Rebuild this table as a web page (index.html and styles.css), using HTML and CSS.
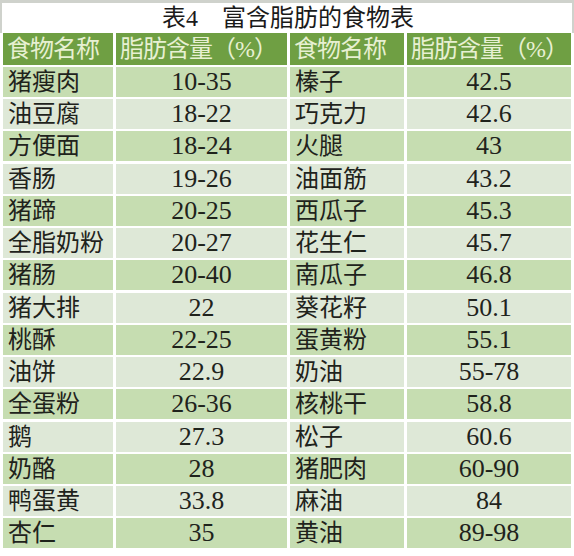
FILE: index.html
```html
<!DOCTYPE html>
<html lang="zh">
<head>
<meta charset="utf-8">
<link rel="stylesheet" href="styles.css">
</head>
<body>
<div class="sheet">
  <div class="title">表4　富含脂肪的食物表</div>
  <div class="table">
    <div class="cell head">食物名称</div><div class="cell head">脂肪含量（%）</div><div class="cell head">食物名称</div><div class="cell head">脂肪含量（%）</div>

    <div class="cell g">猪瘦肉</div><div class="cell g num">10-35</div><div class="cell g">榛子</div><div class="cell g num">42.5</div>
    <div class="cell l">油豆腐</div><div class="cell l num">18-22</div><div class="cell l">巧克力</div><div class="cell l num">42.6</div>
    <div class="cell g">方便面</div><div class="cell g num">18-24</div><div class="cell g">火腿</div><div class="cell g num">43</div>
    <div class="cell l">香肠</div><div class="cell l num">19-26</div><div class="cell l">油面筋</div><div class="cell l num">43.2</div>
    <div class="cell g">猪蹄</div><div class="cell g num">20-25</div><div class="cell g">西瓜子</div><div class="cell g num">45.3</div>
    <div class="cell l">全脂奶粉</div><div class="cell l num">20-27</div><div class="cell l">花生仁</div><div class="cell l num">45.7</div>
    <div class="cell g">猪肠</div><div class="cell g num">20-40</div><div class="cell g">南瓜子</div><div class="cell g num">46.8</div>
    <div class="cell l">猪大排</div><div class="cell l num">22</div><div class="cell l">葵花籽</div><div class="cell l num">50.1</div>
    <div class="cell g">桃酥</div><div class="cell g num">22-25</div><div class="cell g">蛋黄粉</div><div class="cell g num">55.1</div>
    <div class="cell l">油饼</div><div class="cell l num">22.9</div><div class="cell l">奶油</div><div class="cell l num">55-78</div>
    <div class="cell g">全蛋粉</div><div class="cell g num">26-36</div><div class="cell g">核桃干</div><div class="cell g num">58.8</div>
    <div class="cell l">鹅</div><div class="cell l num">27.3</div><div class="cell l">松子</div><div class="cell l num">60.6</div>
    <div class="cell g">奶酪</div><div class="cell g num">28</div><div class="cell g">猪肥肉</div><div class="cell g num">60-90</div>
    <div class="cell l">鸭蛋黄</div><div class="cell l num">33.8</div><div class="cell l">麻油</div><div class="cell l num">84</div>
    <div class="cell g">杏仁</div><div class="cell g num">35</div><div class="cell g">黄油</div><div class="cell g num">89-98</div>
  </div>
</div>
</body>
</html>
```

FILE: styles.css
```css
html, body {
  margin: 0;
  padding: 0;
  background: #ffffff;
}

body {
  width: 574px;
  height: 556px;
  overflow: hidden;
  font-family: "Liberation Serif", "Noto Sans CJK SC", serif;
  color: #1f231c;
}

.sheet {
  width: 574px;
}

.title {
  box-sizing: border-box;
  height: 33px;
  border-top: 3px solid #cfd2cc;
  border-left: 2px solid #cfd2cc;
  border-right: 2px solid #cfd2cc;
  text-align: center;
  font-size: 24px;
  line-height: 30px;
  color: #1a1a1a;
  padding-left: 2px;
}

.table {
  display: grid;
  grid-template-columns: 110px 171px 114px 164px;
  grid-template-rows: 31.6px;
  grid-auto-rows: 29.9px;
  column-gap: 3px;
  row-gap: 2.36px;
  padding-left: 3px;
}

.cell {
  display: flex;
  align-items: center;
  padding-left: 5px;
  font-size: 24px;
  line-height: 1;
  white-space: nowrap;
  overflow: hidden;
}

.head {
  background: #6f9f43;
  color: #e7f0d2;
  font-size: 24px;
  letter-spacing: -1px;
  padding-left: 4px;
}

.g {
  background: #c6ddb1;
}

.l {
  background: #dee8d7;
}

.num {
  justify-content: center;
  padding-left: 0;
  font-size: 26px;
}
```
